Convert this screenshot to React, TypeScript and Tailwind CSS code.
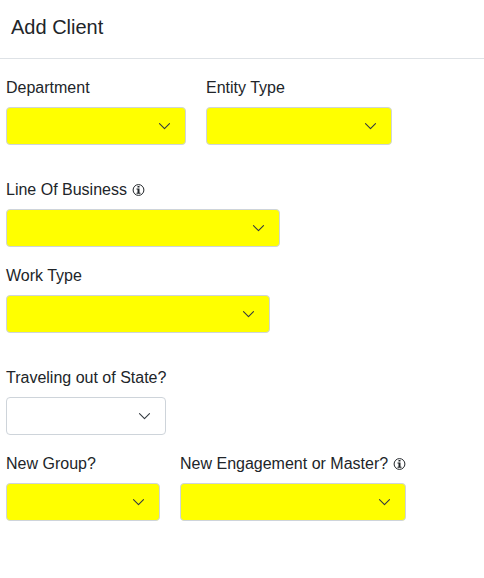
import { useId } from "react";

function InfoIcon() {
  return (
    <svg className="h-[13px] w-[13px] shrink-0" viewBox="0 0 13 13" role="img" aria-label="More information">
      <circle cx="6.5" cy="6" r="5.4" fill="none" stroke="currentColor" strokeWidth="1" />
      <path d="M5.5 2h2v1.6h-2zM4.5 4.5h3v4.2h1v1.1h-4V8.700h1V5.500h-1z" fill="currentColor" />
    </svg>
  );
}

function Chevron() {
  return (
    <svg
      className="pointer-events-none col-start-1 row-start-1 mr-[15px] h-[13px] w-[13px] self-center justify-self-end text-[#343a40]"
      viewBox="0 0 13 13"
      fill="none"
      stroke="currentColor"
      strokeWidth="1.1"
      strokeLinecap="round"
      strokeLinejoin="round"
      aria-hidden="true"
    >
      <path d="M1.500 3.700 6.500 8.700 11.500 3.700" />
    </svg>
  );
}

type FieldProps = { label: string; width: string; required?: boolean; info?: boolean };

function SelectField({ label, width, required = true, info = false }: FieldProps) {
  const id = useId();
  return (
    <div className="flex flex-col items-start gap-[7px]">
      <div className="flex items-center gap-[5px]">
        <label htmlFor={id} className="text-base leading-6 whitespace-nowrap">
          {label}
        </label>
        {info && <InfoIcon />}
      </div>
      <div className={`grid ${width}`}>
        <select
          id={id}
          required={required}
          defaultValue=""
          className={`col-start-1 row-start-1 h-[38px] w-full appearance-none rounded border border-[#ced4da] pr-10 pl-3 text-base ${
            required ? "bg-[#ffff00]" : "bg-white"
          }`}
        >
          <option value=""></option>
        </select>
        <Chevron />
      </div>
    </div>
  );
}

export default function App() {
  return (
    <main className="min-h-screen bg-white font-['Liberation_Sans',Arial,sans-serif] text-[#212529]">
      <header className="border-b border-[#dee2e6] px-[11px] pt-3 pb-4">
        <h1 className="text-xl leading-[30px]">Add Client</h1>
      </header>
      <form className="flex flex-col gap-[33px] px-1.5 pt-[17px] pb-8">
        <div className="flex gap-5">
          <SelectField label="Department" width="w-[180px]" />
          <SelectField label="Entity Type" width="w-[186px]" />
        </div>
        <div className="flex flex-col gap-[17px]">
          <SelectField label="Line Of Business" width="w-[274px]" info />
          <SelectField label="Work Type" width="w-[264px]" />
        </div>
        <div className="flex flex-col gap-[17px]">
          <SelectField label="Traveling out of State?" width="w-[160px]" required={false} />
          <div className="flex gap-5">
            <SelectField label="New Group?" width="w-[154px]" />
            <SelectField label="New Engagement or Master?" width="w-[226px]" info />
          </div>
        </div>
      </form>
    </main>
  );
}
